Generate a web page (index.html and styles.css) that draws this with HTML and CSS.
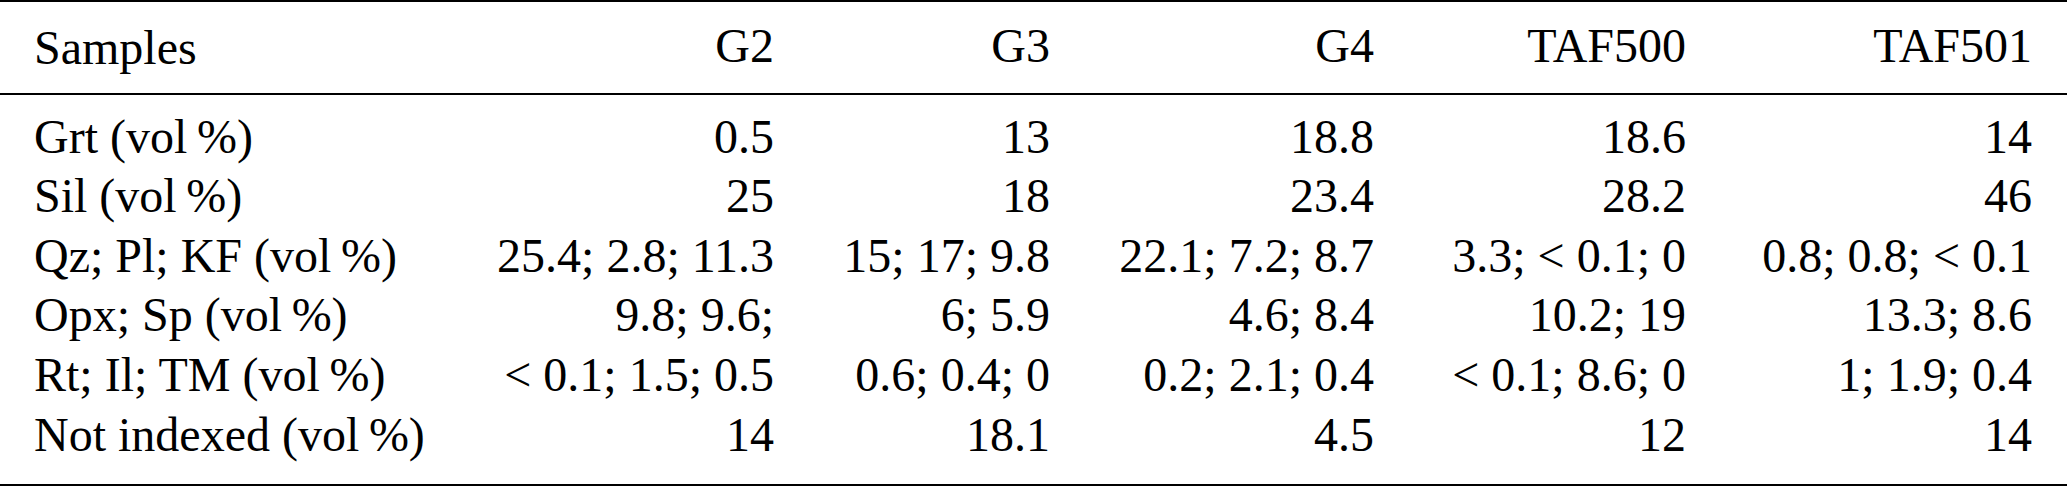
FILE: index.html
```html
<!DOCTYPE html>
<html lang="en">
<head>
<meta charset="utf-8">
<title>Samples table</title>
<link rel="stylesheet" href="styles.css">
</head>
<body>
<table class="data">
  <colgroup>
    <col class="c1"><col class="c2"><col class="c3"><col class="c4"><col class="c5"><col class="c6">
  </colgroup>
  <thead>
    <tr>
      <th class="lab">Samples</th>
      <th>G2</th>
      <th>G3</th>
      <th>G4</th>
      <th>TAF500</th>
      <th>TAF501</th>
    </tr>
  </thead>
  <tbody>
    <tr class="first">
      <td class="lab">Grt (vol&#8201;%)</td>
      <td>0.5</td><td>13</td><td>18.8</td><td>18.6</td><td>14</td>
    </tr>
    <tr>
      <td class="lab">Sil (vol&#8201;%)</td>
      <td>25</td><td>18</td><td>23.4</td><td>28.2</td><td>46</td>
    </tr>
    <tr>
      <td class="lab">Qz; Pl; KF (vol&#8201;%)</td>
      <td>25.4; 2.8; 11.3</td><td>15; 17; 9.8</td><td>22.1; 7.2; 8.7</td><td>3.3; &lt; 0.1; 0</td><td>0.8; 0.8; &lt; 0.1</td>
    </tr>
    <tr>
      <td class="lab">Opx; Sp (vol&#8201;%)</td>
      <td>9.8; 9.6;</td><td>6; 5.9</td><td>4.6; 8.4</td><td>10.2; 19</td><td>13.3; 8.6</td>
    </tr>
    <tr>
      <td class="lab">Rt; Il; TM (vol&#8201;%)</td>
      <td>&lt; 0.1; 1.5; 0.5</td><td>0.6; 0.4; 0</td><td>0.2; 2.1; 0.4</td><td>&lt; 0.1; 8.6; 0</td><td>1; 1.9; 0.4</td>
    </tr>
    <tr class="last">
      <td class="lab">Not indexed (vol&#8201;%)</td>
      <td>14</td><td>18.1</td><td>4.5</td><td>12</td><td>14</td>
    </tr>
  </tbody>
</table>
</body>
</html>
```
FILE: styles.css
```css
html, body {
  margin: 0;
  padding: 0;
  background: #ffffff;
}

body {
  font-family: "Liberation Serif", "Times New Roman", serif;
  font-size: 48px;
  color: #000000;
}

.data {
  width: 2067px;
  table-layout: fixed;
  border-collapse: separate;
  border-spacing: 0;
}

.c1 { width: 457px; }
.c2 { width: 352px; }
.c3 { width: 276px; }
.c4 { width: 324px; }
.c5 { width: 312px; }
.c6 { width: 346px; }

.data th,
.data td {
  font-family: "Liberation Serif", "Times New Roman", serif;
  font-weight: normal;
  line-height: 59.6px;
  padding: 0 35px 0 0;
  text-align: right;
  white-space: nowrap;
}

.data .lab {
  text-align: left;
  padding: 0 0 0 34px;
}

.data thead th {
  border-top: 2px solid #000;
  border-bottom: 2px solid #000;
  padding-top: 14px;
  padding-bottom: 17px;
}

.data tr.first td {
  padding-top: 12px;
}

.data tr.last td {
  padding-bottom: 20px;
  border-bottom: 2px solid #000;
}
```
